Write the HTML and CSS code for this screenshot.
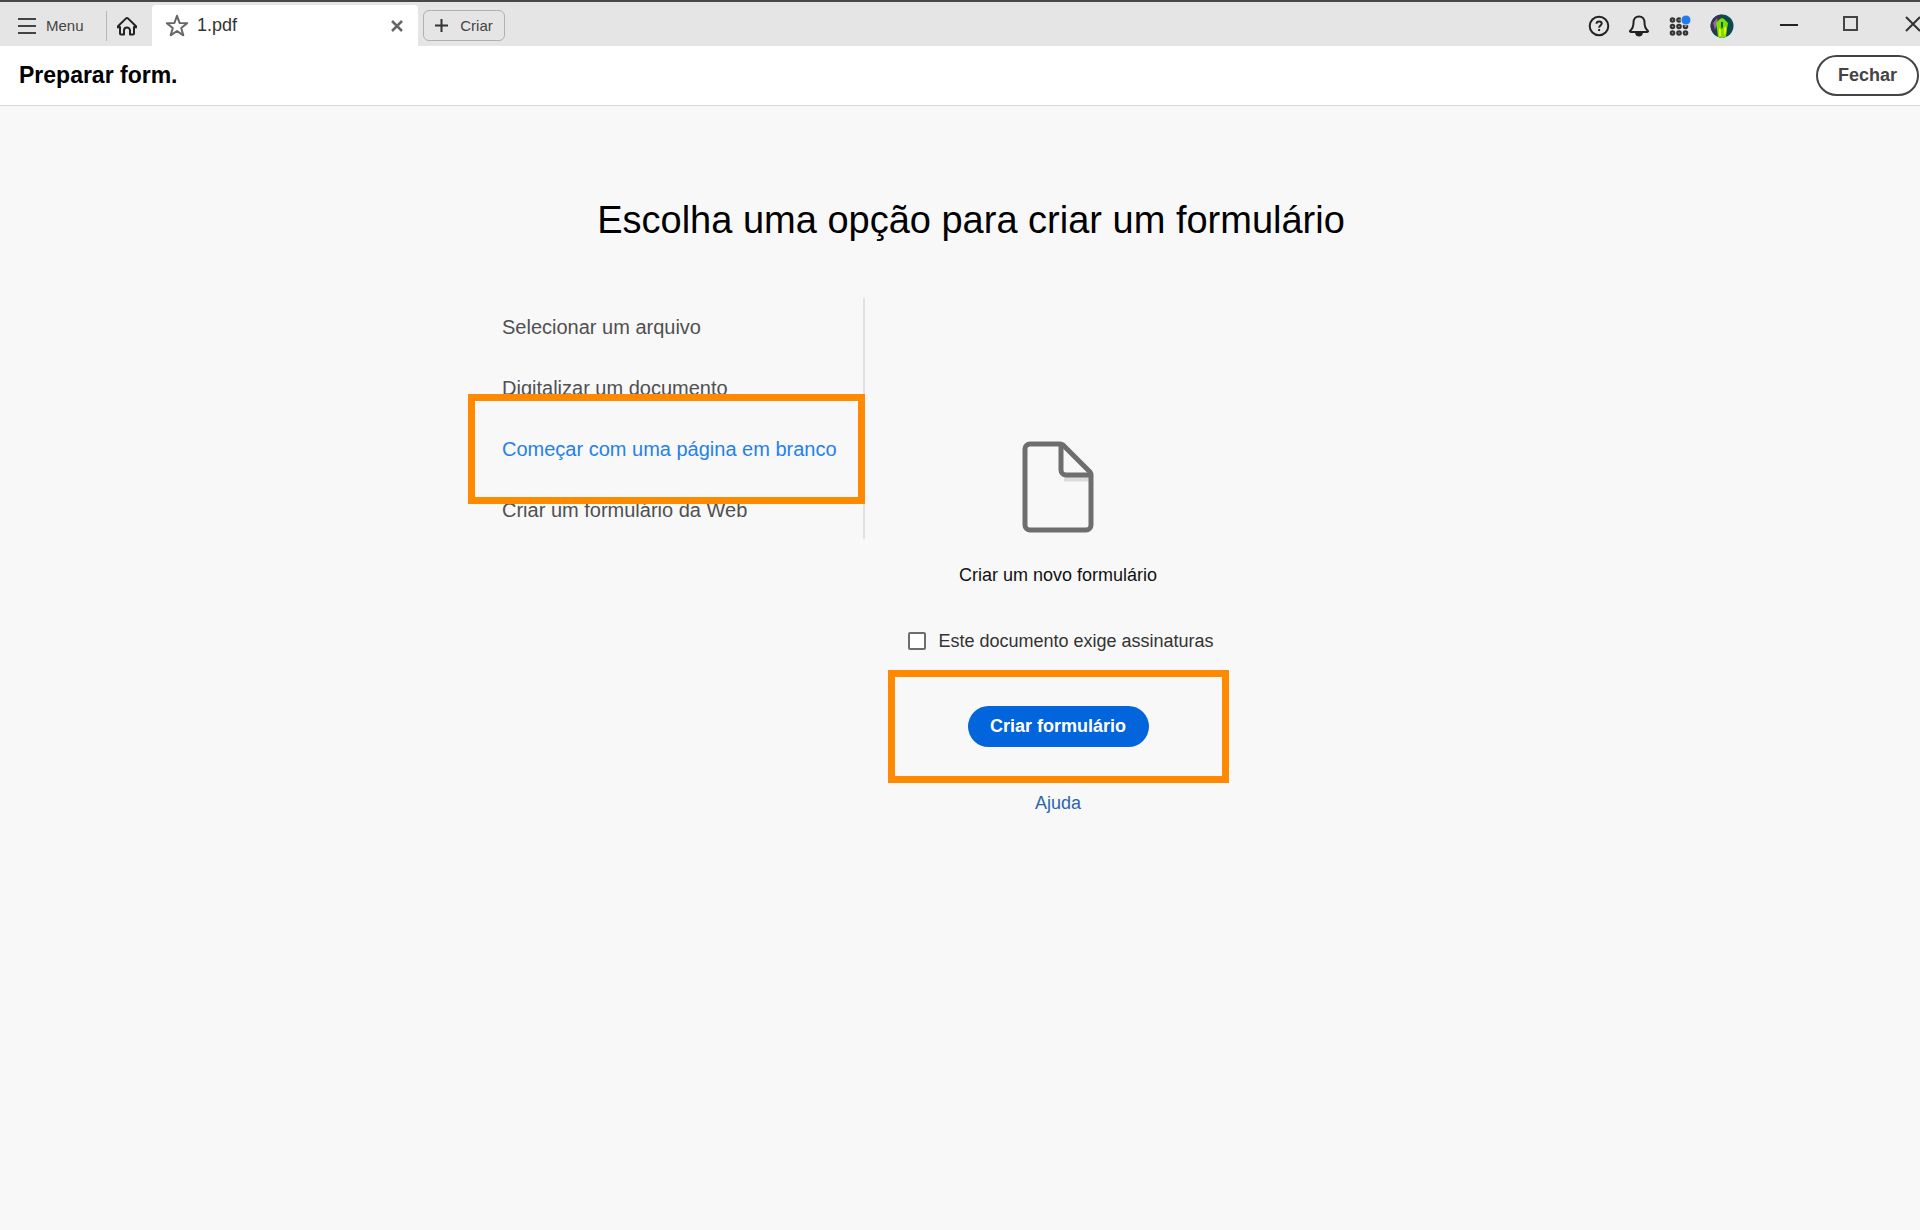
FILE: index.html
```html
<!DOCTYPE html>
<html lang="pt-BR">
<head>
  <meta charset="UTF-8">
  <meta name="viewport" content="width=device-width, initial-scale=1.0">
  <title>Preparar form.</title>
  <link rel="stylesheet" href="styles.css">
</head>
<body>
  <nav class="titlebar">
    <button class="menu" type="button">
      <svg width="18" height="16" viewBox="0 0 18 16" fill="none" stroke="#444" stroke-width="2"><path d="M0 1h18M0 8h18M0 15h18"/></svg>
      Menu
    </button>
    <button class="home" type="button" aria-label="Início">
      <svg width="22" height="20" viewBox="0 0 22 20" fill="none" stroke="#222" stroke-width="2" stroke-linejoin="round" stroke-linecap="round"><path d="M2 11.500v-1.300l7.800-7.600a1.700 1.700 0 0 1 2.400 0l7.800 7.600v1.300M4 11v6.500c0 .6.400 1 1 1h3v-4a3 3 0 0 1 6 0v4h3c.6 0 1-.4 1-1V11"/></svg>
    </button>
    <div class="tab">
      <svg width="24" height="23" viewBox="0 0 24 23" fill="none" stroke="#666" stroke-width="2" stroke-linejoin="round"><path d="M12 1.800 14.600 9l7.600.3-6 4.700 2.100 7.300L12 17l-6.300 4.300L7.800 14l-6-4.700L9.400 9z"/></svg>
      <span class="tab-name">1.pdf</span>
      <button type="button" aria-label="Fechar guia">
        <svg width="12" height="12" viewBox="0 0 12 12" fill="none" stroke="#666" stroke-width="2.500"><path d="M1 1l10 10M11 1 1 11"/></svg>
      </button>
    </div>
    <button class="new-tab" type="button">
      <svg width="13" height="13" viewBox="0 0 13 13" fill="none" stroke="#333" stroke-width="2"><path d="M6.500 0v13M0 6.500h13"/></svg>
      Criar
    </button>

    <div class="tools">
      <button type="button" aria-label="Ajuda">
        <svg width="22" height="22" viewBox="0 0 22 22" fill="none" stroke="#222" stroke-width="2"><circle cx="11" cy="11" r="9.300"/><path d="M8.500 8.700c.1-1.500 1.200-2.300 2.600-2.300 1.500 0 2.600.9 2.600 2.200 0 1.800-2.600 2-2.600 4.100"/><path d="M11.100 14v2"/></svg>
      </button>
      <button type="button" aria-label="Notificações">
        <svg width="22" height="22" viewBox="0 0 22 22" fill="none" stroke="#222" stroke-width="2" stroke-linejoin="round"><path d="M11 1.500c-3.500 0-5.500 2.600-5.500 6 0 5-1.300 6.500-3.300 8.200-.5.500-.3 1.300.5 1.300h16.600c.8 0 1-.8.500-1.300-2-1.700-3.300-3.200-3.300-8.200 0-3.400-2-6-5.500-6z"/><path d="M8 17.500c.2 2 1.400 3 3 3s2.800-1 3-3" fill="#222"/></svg>
      </button>
      <button type="button" aria-label="Aplicativos">
        <svg width="24" height="22" viewBox="0 0 24 22" fill="#999" stroke="#333" stroke-width="2"><circle cx="4.500" cy="5" r="1.800"/><circle cx="11" cy="5" r="1.800"/><circle cx="4.500" cy="11.500" r="1.800"/><circle cx="11" cy="11.500" r="1.800"/><circle cx="17.500" cy="11.500" r="1.800"/><circle cx="4.500" cy="18" r="1.800"/><circle cx="11" cy="18" r="1.800"/><circle cx="17.500" cy="18" r="1.800"/><circle cx="18" cy="5" r="5" fill="#1f7bf0" stroke="#e5e5e5" stroke-width="1"/></svg>
      </button>
      <button type="button" aria-label="Conta">
        <svg width="24" height="24" viewBox="0 0 24 24"><circle cx="12" cy="12" r="11.500" fill="#0b4a52"/><path d="M12 .5A11.500 11.500 0 0 0 4 20L9 6z" fill="#3d2f52"/><path d="M3 9l4-5 1 4-3 8z" fill="#8a6a9c"/><path d="M8 22.800 7 15 6 9l4-4 2-1 2 1 4 4-1 6-1 7.800a11 11 0 0 1-8 0z" fill="#7be000"/><path d="M9 14l2 2v6H9zM14 14l2-2v7l-2 2z" fill="#f2f000"/><path d="M11 8h2v5l-1 2-1-2z" fill="#175c23"/></svg>
      </button>
    </div>
    <div class="window-buttons">
      <button type="button" aria-label="Minimizar">
        <svg width="18" height="18" viewBox="0 0 18 18" fill="none" stroke="#222" stroke-width="2"><path d="M0 10h18"/></svg>
      </button>
      <button type="button" aria-label="Maximizar">
        <svg width="18" height="18" viewBox="0 0 18 18" fill="none" stroke="#444" stroke-width="2"><path d="M2 2h13v13H2z"/></svg>
      </button>
      <button type="button" aria-label="Fechar janela">
        <svg width="18" height="18" viewBox="0 0 18 18" fill="none" stroke="#333" stroke-width="2"><path d="M2 2l14 14M16 2 2 16"/></svg>
      </button>
    </div>
  </nav>

  <header class="toolbar">
    <h2>Preparar form.</h2>
    <button class="close" type="button">Fechar</button>
  </header>

  <main class="content">
    <h1>Escolha uma opção para criar um formulário</h1>
    <div class="columns">
      <ul class="options">
        <li><a href="#">Selecionar um arquivo</a></li>
        <li><a href="#">Digitalizar um documento</a></li>
        <li class="marked"><a class="selected" href="#">Começar com uma página em branco</a></li>
        <li><a href="#">Criar um formulário da Web</a></li>
      </ul>
      <form class="panel">
        <svg width="72" height="92" viewBox="0 0 72 92" fill="none" stroke="#6e6e6e" stroke-width="5" stroke-linejoin="round">
          <path d="M42 38h26" stroke="#dcdcdc"/>
          <path d="M38 3H8a5 5 0 0 0-5 5v76a5 5 0 0 0 5 5h56a5 5 0 0 0 5-5V34a5 5 0 0 0-1-3L41 4a5 5 0 0 0-3-1z"/>
          <path d="M39 4v25a5 5 0 0 0 5 5h25"/>
        </svg>
        <p>Criar um novo formulário</p>
        <div class="check">
          <input type="checkbox" id="signatures">
          <label for="signatures">Este documento exige assinaturas</label>
        </div>
        <div class="action marked">
          <button type="button">Criar formulário</button>
        </div>
        <a class="help" href="#">Ajuda</a>
      </form>
    </div>
  </main>
</body>
</html>
```

FILE: styles.css
```css
* { box-sizing: border-box; }
body { margin: 0; min-height: 100vh; background: #f8f8f8; color: #111; font-family: "Liberation Sans", Arial, sans-serif; font-size: 18px; overflow-x: hidden; }
button { font-family: inherit; border: none; background: none; padding: 0; cursor: pointer; display: flex; align-items: center; justify-content: center; }
svg { display: block; flex: none; }
a { text-decoration: none; }

/* window bar */
.titlebar { display: flex; align-items: center; height: 46px; padding-top: 3px; background: #e5e5e5; border-top: 2px solid #4a464a; }
.menu { gap: 10px; width: 107px; height: 30px; padding-left: 18px; justify-content: flex-start; border-right: 1px solid #b5b5b5; font-size: 15px; color: #444; }
.home { width: 45px; padding-right: 6px; }
.tab { display: flex; align-items: center; align-self: stretch; width: 266px; padding: 0 15px 0 13px; background: #fff; border-radius: 4px 4px 0 0; }
.tab-name { flex: 1; margin-left: 8px; color: #333; }
.new-tab { gap: 12px; width: 82px; height: 31px; margin-left: 5px; border: 1px solid #b0b0b0; border-radius: 6px; font-size: 15px; color: #444; }
.tools { display: flex; align-items: center; gap: 18px; margin-left: auto; }
.window-buttons { display: flex; gap: 44px; margin: 0 -2px 4px 46px; }

.toolbar { display: flex; align-items: center; justify-content: space-between; height: 60px; padding: 0 1px 0 19px; background: #fff; border-bottom: 1px solid #d8d8d8; }
.toolbar h2 { margin: 0; font-size: 23px; color: #000; }
.close { width: 103px; height: 41px; border: 2px solid #444; border-radius: 21px; font-size: 18px; font-weight: bold; color: #444; }

.content { padding: 92px 0 0 22px; }
.content h1 { margin: 0 0 56px; font-size: 38px; line-height: 44px; font-weight: normal; text-align: center; color: #000; }
.columns { display: flex; align-items: flex-start; max-width: 938px; margin: 0 auto; }

.options { display: flex; flex-direction: column; gap: 3px; list-style: none; width: 363px; margin: 0; padding: 0; border-right: 2px solid #e2e2e2; font-size: 20px; }
.options li { line-height: 58px; }
.options a { color: #505050; }
.options .selected { color: #2680eb; }

.panel { display: flex; flex-direction: column; align-items: center; width: 386px; padding-top: 143px; }
.panel p { margin: 31px 0 44px; line-height: 22px; }
.check { display: flex; align-items: center; gap: 12px; margin-left: 6px; line-height: 22px; color: #333; }
.check input { appearance: none; width: 18px; height: 18px; margin: 0; border: 2px solid #6e6e6e; border-radius: 2px; background: #fff; }
.action { margin: 54px 0 45px; }
.action button { width: 181px; height: 41px; border-radius: 21px; background: #0265dc; color: #fff; font-size: 18px; font-weight: bold; }
.help { line-height: 22px; color: #2c64ae; }

/* orange highlight frames */
.marked { position: relative; }
.marked::after { content: ""; position: absolute; border: 7px solid #ff8a00; pointer-events: none; }
.options .marked::after { inset: -26px -2px -26px -34px; }
.action::after { inset: -36px -80px; }
```
